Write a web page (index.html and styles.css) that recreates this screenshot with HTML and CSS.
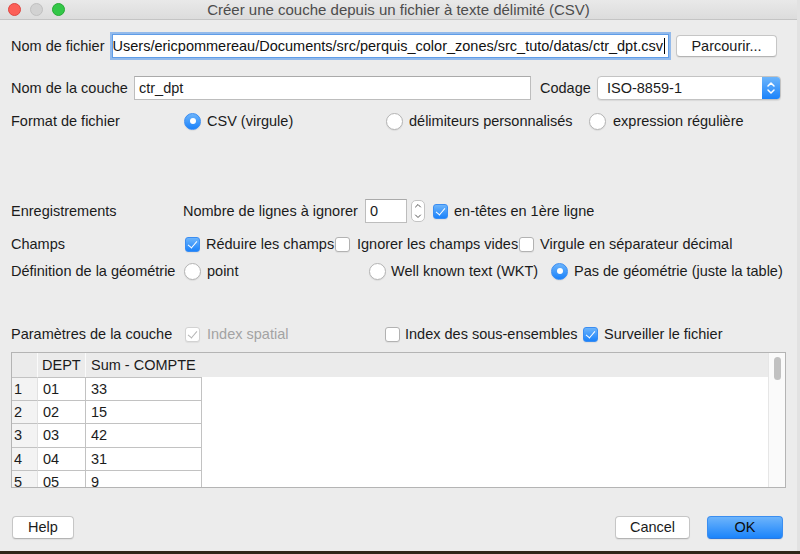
FILE: index.html
```html
<!DOCTYPE html>
<html lang="fr">
<head>
<meta charset="utf-8">
<title>Créer une couche depuis un fichier à texte délimité (CSV)</title>
<link rel="stylesheet" href="styles.css">
</head>
<body>
<div class="window">
  <div class="titlebar">
    <div class="lights">
      <span class="light red"></span>
      <span class="light grey"></span>
      <span class="light green"></span>
    </div>
    <div class="title">Créer une couche depuis un fichier à texte délimité (CSV)</div>
    <div></div>
  </div>

  <div class="content">
    <div class="row r-file">
      <span class="lbl-file">Nom de fichier</span>
      <div class="path"><span class="path-text">/Users/ericpommereau/Documents/src/perquis_color_zones/src_tuto/datas/ctr_dpt.csv</span><span class="caret"></span></div>
      <div class="btn browse">Parcourir...</div>
    </div>

    <div class="row r-layer">
      <span class="lbl-layer">Nom de la couche</span>
      <div class="field layer-name">ctr_dpt</div>
      <span class="lbl-codage">Codage</span>
      <div class="select">
        <span class="select-text">ISO-8859-1</span>
        <span class="select-arrows">
          <svg width="10" height="14" viewBox="0 0 10 14"><path d="M2 5 L5 2 L8 5 M2 9 L5 12 L8 9" fill="none" stroke="#fff" stroke-width="1.5" stroke-linecap="round" stroke-linejoin="round"/></svg>
        </span>
      </div>
    </div>

    <div class="row r-format">
      <span class="lbl lbl-173">Format de fichier</span>
      <label class="opt w202"><span class="radio on"></span>CSV (virgule)</label>
      <label class="opt w203"><span class="radio"></span>délimiteurs personnalisés</label>
      <label class="opt gap7"><span class="radio"></span>expression régulière</label>
    </div>

    <div class="row r-enreg">
      <span class="lbl lbl-172">Enregistrements</span>
      <span class="skip-lbl">Nombre de lignes à ignorer</span>
      <div class="field spin">0</div>
      <div class="stepper">
        <svg width="8" height="18" viewBox="0 0 8 18"><path d="M1.5 5 L4 2.5 L6.5 5 M1.5 13 L4 15.5 L6.5 13" fill="none" stroke="#555" stroke-width="1" stroke-linecap="round" stroke-linejoin="round"/></svg>
      </div>
      <label class="opt hdr-opt"><span class="check on"></span>en-têtes en 1ère ligne</label>
    </div>

    <div class="row r-champs">
      <span class="lbl lbl-174">Champs</span>
      <label class="opt w150"><span class="check on"></span>Réduire les champs</label>
      <label class="opt w184 gap7"><span class="check"></span>Ignorer les champs vides</label>
      <label class="opt"><span class="check"></span>Virgule en séparateur décimal</label>
    </div>

    <div class="row r-geom">
      <span class="lbl lbl-173">Définition de la géométrie</span>
      <label class="opt w185"><span class="radio"></span>point</label>
      <label class="opt w182 gap5"><span class="radio"></span>Well known text (WKT)</label>
      <label class="opt"><span class="radio on"></span>Pas de géométrie (juste la table)</label>
    </div>

    <div class="row r-params">
      <span class="lbl lbl-174">Paramètres de la couche</span>
      <label class="opt w200 gap7 disabled"><span class="check on dis"></span>Index spatial</label>
      <label class="opt w198 gap5"><span class="check"></span>Index des sous-ensembles</label>
      <label class="opt"><span class="check on"></span>Surveiller le fichier</label>
    </div>

    <div class="table">
      <div class="grid-area">
        <div class="thead">
          <div class="hc c0"></div>
          <div class="hc c1">DEPT</div>
          <div class="hc c2">Sum - COMPTE</div>
        </div>
        <div class="tbody">
          <div class="rh">1</div><div class="td">01</div><div class="td">33</div>
          <div class="rh">2</div><div class="td">02</div><div class="td">15</div>
          <div class="rh">3</div><div class="td">03</div><div class="td">42</div>
          <div class="rh">4</div><div class="td">04</div><div class="td">31</div>
          <div class="rh">5</div><div class="td">05</div><div class="td">9</div>
        </div>
      </div>
      <div class="scrollbar"><div class="thumb"></div></div>
    </div>

    <div class="row r-buttons">
      <div class="btn help">Help</div>
      <div class="spacer"></div>
      <div class="btn cancel">Cancel</div>
      <div class="btn ok">OK</div>
    </div>
  </div>
</div>
</body>
</html>
```

FILE: styles.css
```css
* { box-sizing: border-box; }

html, body {
  margin: 0;
  padding: 0;
}

body {
  background: #2e2619;
  font-family: "Liberation Sans", Arial, sans-serif;
  font-size: 14.5px;
  color: #1b1b1b;
  width: 800px;
  height: 554px;
  overflow: hidden;
}

.window {
  width: 800px;
  height: 551px;
  background: #ececec;
  display: flex;
  flex-direction: column;
  border-right: 3px solid #e2e2e2;
}

/* Title bar */
.titlebar {
  height: 20px;
  flex: none;
  background: linear-gradient(#e9e9e9, #dcdcdc);
  border-bottom: 1px solid #c4c4c4;
  display: grid;
  grid-template-columns: 1fr auto 1fr;
  align-items: center;
}

.lights {
  display: flex;
  gap: 9px;
  padding-left: 8px;
  align-items: center;
}

.light {
  width: 13px;
  height: 13px;
  border-radius: 50%;
  display: block;
}

.light.red { background: #fc5f57; border: 1px solid #de4641; }
.light.grey { background: #d2d2d2; border: 1px solid #c0c0c0; }
.light.green { background: #33c748; border: 1px solid #27aa35; }

.title {
  font-size: 15px;
  color: #4c4c4c;
  white-space: nowrap;
  line-height: 19px;
}

/* Content */
.content {
  display: flex;
  flex-direction: column;
  padding: 0 14px 0 11px;
}

.row {
  display: flex;
  align-items: center;
  white-space: nowrap;
}

.r-file { margin-top: 13px; height: 26px; }
.r-layer { margin-top: 17px; height: 24px; }
.r-format { margin-top: 10px; height: 22px; }
.r-enreg { margin-top: 67px; height: 24px; }
.r-champs { margin-top: 10px; height: 22px; }
.r-geom { margin-top: 5px; height: 22px; }
.r-params { margin-top: 41px; height: 22px; }
.r-buttons { margin-top: 28px; height: 23px; }

.lbl-file { width: 101px; flex: none; }
.lbl-layer { width: 123px; flex: none; }
.lbl-codage { margin-left: 9px; width: 57px; flex: none; }

.lbl { flex: none; }
.lbl-172 { width: 172px; }
.lbl-173 { width: 173px; }
.lbl-174 { width: 174px; }

/* Inputs */
.field {
  background: #fff;
  border: 1px solid #bdbdbd;
  border-top-color: #aaaaaa;
  height: 24px;
  line-height: 22px;
  padding-left: 4px;
  flex: none;
}

.path {
  width: 557px;
  height: 24px;
  flex: none;
  background: #fff;
  border: 1px solid #5f9de8;
  box-shadow: 0 0 0 2px rgba(110, 165, 235, 0.7);
  display: flex;
  justify-content: flex-end;
  align-items: center;
  overflow: hidden;
  padding-right: 3px;
}

.path-text {
  flex: none;
  color: #111;
}

.caret {
  flex: none;
  width: 1px;
  height: 16px;
  background: #000;
  margin-left: 1px;
}

.layer-name { width: 397px; }

.select {
  width: 184px;
  height: 24px;
  background: #fff;
  border: 1px solid #c3c3c3;
  border-radius: 4px;
  box-shadow: 0 1px 1px rgba(0, 0, 0, 0.08);
  display: flex;
  align-items: center;
  overflow: hidden;
  flex: none;
}

.select-text {
  flex: 1;
  padding-left: 9px;
  color: #1b1b1b;
}

.select-arrows {
  width: 18px;
  height: 100%;
  background: linear-gradient(#6db5fb, #1b83fb);
  display: flex;
  align-items: center;
  justify-content: center;
}

/* Options */
.opt {
  display: flex;
  align-items: center;
  gap: 6px;
  flex: none;
}

.gap5 { gap: 5px; }
.gap7 { gap: 7px; }
.w150 { width: 150px; }
.w182 { width: 182px; }
.w184 { width: 184px; }
.w185 { width: 185px; }
.w198 { width: 198px; }
.w200 { width: 200px; }
.w202 { width: 202px; }
.w203 { width: 203px; }

.disabled { color: #a3a3a3; }

.radio {
  width: 17px;
  height: 17px;
  border-radius: 50%;
  background: #fff;
  border: 1px solid #b4b4b4;
  box-shadow: 0 1px 1px rgba(0, 0, 0, 0.07);
  flex: none;
  display: flex;
  align-items: center;
  justify-content: center;
}

.radio.on {
  background: linear-gradient(#6cb4fb, #1a82fb);
  border-color: #3a8df2;
}

.radio.on::after {
  content: "";
  width: 6px;
  height: 6px;
  border-radius: 50%;
  background: #fff;
}

.check {
  width: 15px;
  height: 15px;
  border-radius: 3px;
  background: #fff;
  border: 1px solid #b2b2b2;
  box-shadow: 0 1px 1px rgba(0, 0, 0, 0.06);
  flex: none;
  position: relative;
}

.check.on {
  background: linear-gradient(#6cb4fb, #1a82fb);
  border-color: #3a8df2;
}

.check.on::after {
  content: "";
  position: absolute;
  left: 4px;
  top: 1px;
  width: 4px;
  height: 8px;
  border-right: 1.6px solid #fff;
  border-bottom: 1.6px solid #fff;
  transform: rotate(40deg);
}

.check.dis {
  background: #fff;
  border-color: #d2d2d2;
}

.check.dis::after {
  border-color: #b4b4b4;
}

/* Enregistrements row */
.skip-lbl { width: 182px; flex: none; }

.spin {
  width: 42px;
  padding-left: 4px;
}

.stepper {
  width: 14px;
  height: 22px;
  margin-left: 4px;
  background: #fff;
  border: 1px solid #c4c4c4;
  border-radius: 5px;
  display: flex;
  align-items: center;
  justify-content: center;
  flex: none;
}

.hdr-opt { margin-left: 8px; }

/* Table */
.table {
  margin-top: 7px;
  height: 136px;
  width: 775px;
  border: 1px solid #b4b4b4;
  background: #fff;
  display: flex;
}

.grid-area {
  flex: 1;
  display: flex;
  flex-direction: column;
  overflow: hidden;
}

.thead {
  height: 24px;
  background: #ebebeb;
  display: flex;
  flex: none;
}

.hc {
  height: 24px;
  line-height: 24px;
  padding-left: 5px;
  border-right: 1px solid #fafafa;
  flex: none;
}

.hc.c0 { width: 26px; }
.hc.c1 { width: 48px; padding-left: 4px; }
.hc.c2 { width: 116px; border-right: none; }

.tbody {
  display: grid;
  grid-template-columns: 26px 48px 116px;
  grid-auto-rows: 23.5px;
}

.rh, .td {
  border-bottom: 1px solid #c2c2c2;
  line-height: 22px;
}

.rh {
  background: #f3f3f3;
  padding-left: 2px;
  border-right: 1px solid #e2e2e2;
}

.td {
  padding-left: 5px;
  border-right: 1px solid #c2c2c2;
}

.tbody > div:nth-child(-n+3) {
  border-top: 1px solid #c2c2c2;
}

.scrollbar {
  width: 17px;
  flex: none;
  background: #fafafa;
  border-left: 1px solid #e6e6e6;
  display: flex;
  justify-content: center;
  padding-top: 4px;
}

.thumb {
  width: 7px;
  height: 23px;
  border-radius: 4px;
  background: #c1c1c1;
}

/* Buttons */
.btn {
  height: 23px;
  line-height: 21px;
  text-align: center;
  background: #fff;
  border: 1px solid #c6c6c6;
  border-bottom-color: #b4b4b4;
  border-radius: 4px;
  box-shadow: 0 1px 1px rgba(0, 0, 0, 0.06);
  color: #1b1b1b;
  flex: none;
}

.browse {
  width: 101px;
  height: 22px;
  margin-left: 7px;
  line-height: 20px;
}

.spacer { flex: 1; }

.help { width: 62px; margin-left: 1px; }
.cancel { width: 75px; }
.ok {
  width: 76px;
  margin-left: 17px;
  background: linear-gradient(#6db4fb, #1b84fb);
  border-color: #3b8ef0;
  border-bottom-color: #2a78e0;
  color: #0c0c0c;
}
```
